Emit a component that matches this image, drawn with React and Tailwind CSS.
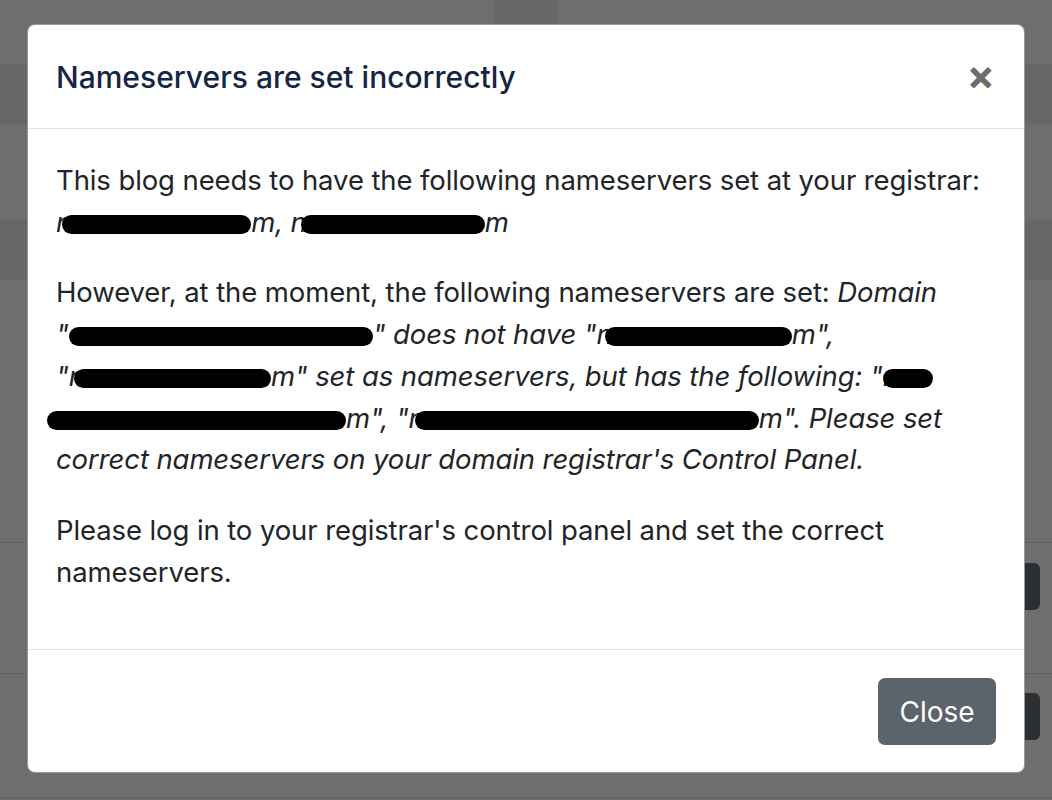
const Pill = ({ w, ml = 0 }) => (
  <span
    className="relative inline-block h-[19px] rounded-full bg-black align-middle"
    style={{ width: w, marginLeft: ml }}
  />
);

export default function App() {
  return (
    <div className="relative h-[800px] w-full overflow-hidden bg-[#6e6e6e] font-['Inter','Liberation_Sans',sans-serif]">
      {/* page behind the backdrop */}
      <div className="flex h-full flex-col">
        <div className="flex h-[64px]">
          <div className="ml-[495px] h-full w-[62px] bg-[#686868]" />
        </div>
        <div className="h-[60px] bg-[#676767]" />
        <div className="h-[96px]" />
        <div className="h-[60px] bg-[#676767]" />
        <div className="h-[262px]" />
        <div className="flex h-[131px] justify-end border-t border-[#5f5f5f] pt-[20px] pr-[12px]">
          <div className="h-[47px] w-[60px] rounded-md bg-[#2b2f32]" />
        </div>
        <div className="flex h-[124px] justify-end border-t border-[#5f5f5f] pt-[19px] pr-[12px]">
          <div className="h-[47px] w-[60px] rounded-md bg-[#2b2f32]" />
        </div>
        <div className="border-t border-[#5f5f5f]" />
      </div>

      {/* modal */}
      <div className="absolute left-[27px] top-[24px] flex w-[998px] flex-col rounded-[8px] border border-black/40 bg-white">
        <div className="flex h-[104px] items-center justify-between border-b border-[#dee2e6] px-[28px]">
          <h5 className="text-[30px] font-medium leading-none text-[#172545]">
            Nameservers are set incorrectly
          </h5>
          <button className="mr-[1px] mb-[4px] text-[42px] font-bold leading-none text-[#6d6d6d]">
            ×
          </button>
        </div>

        <div className="px-[28px] pt-[31px] pb-[27px] text-[27.5px] leading-[41.7px] tracking-[-0.1px] text-[#212529]">
          <p className="mb-[29px] whitespace-nowrap">
            This blog needs to have the following nameservers set at your registrar:
            <br />
            <i>
              n<Pill w={189} ml={-10} />m, n<Pill w={184} ml={-6} />m
            </i>
          </p>
          <p className="mb-[29px] whitespace-nowrap">
            However, at the moment, the following nameservers are set: <i>Domain</i>
            <br />
            <i>
              "<Pill w={304} ml={0} />" does not have "n<Pill w={187} ml={-8} />m",
            </i>
            <br />
            <i>
              "n<Pill w={197} ml={-11} />m" set as nameservers, but has the following: "n
              <Pill w={50} ml={-16} />
            </i>
            <br />
            <i>
              <Pill w={299} ml={-9} />m", "n<Pill w={344} ml={-10} />m". Please set
            </i>
            <br />
            <i>correct nameservers on your domain registrar's Control Panel.</i>
          </p>
          <p className="mb-[29px]">
            Please log in to your registrar's control panel and set the correct
            <br />
            nameservers.
          </p>
        </div>

        <div className="flex justify-end border-t border-[#dee2e6] px-[28px] pt-[28px] pb-[27px]">
          <button className="h-[67px] w-[118px] rounded-[7px] bg-[#5b636b] text-[28px] text-white">
            Close
          </button>
        </div>
      </div>
    </div>
  );
}
